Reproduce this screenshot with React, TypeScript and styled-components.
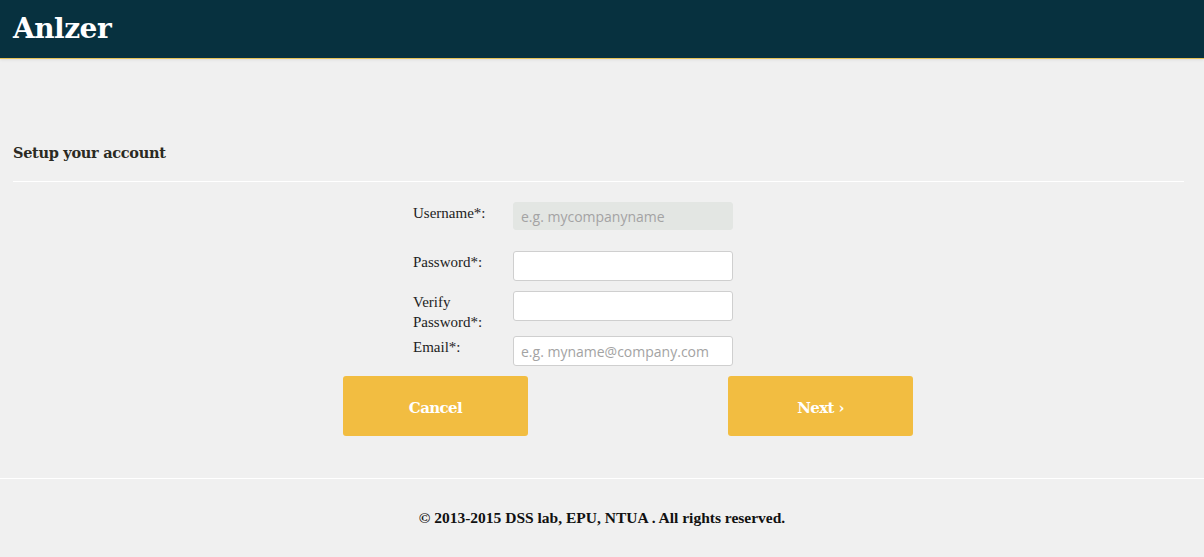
import React from "react";
import styled, { createGlobalStyle } from "styled-components";

const Global = createGlobalStyle`
  html, body { margin: 0; padding: 0; background: #f0f0f0; }
  body { font-family: "DejaVu Serif", Georgia, serif; }
  * { box-sizing: border-box; }
`;

const Header = styled.header`
  height: 59px;
  background: #07313f;
  border-bottom: 1px solid #e6c35a;
  box-shadow: 0 1px 3px rgba(0,0,0,0.08);
  display: flex;
  align-items: center;
  padding: 0 13px;
`;

const Logo = styled.h1`
  margin: 0;
  color: #fff;
  font-family: "DejaVu Serif", serif;
  font-weight: bold;
  font-size: 28px;
  letter-spacing: -0.5px;
  padding-bottom: 1px;
`;

const Main = styled.main`
  padding: 85px 20px 0 13px;
`;

const Title = styled.h2`
  margin: 0;
  font-family: "DejaVu Serif", serif;
  font-weight: bold;
  font-size: 14.5px;
  color: #2b2a22;
  letter-spacing: -0.3px;
  padding-bottom: 20px;
  border-bottom: 1px solid #fff;
`;

const Form = styled.form`
  display: flex;
  flex-direction: column;
  padding-top: 20px;
`;

const Fields = styled.div`
  display: grid;
  grid-template-columns: 100px 220px;
  margin-left: 400px;
`;

const Label = styled.label<{ $mb: number }>`
  font-family: "Liberation Serif", Georgia, serif;
  font-size: 15px;
  line-height: 20px;
  color: #222;
  padding-top: 1px;
  margin-bottom: ${(p) => p.$mb}px;
`;

const Input = styled.input<{ $h: number; $mb: number }>`
  width: 220px;
  height: ${(p) => p.$h}px;
  margin-bottom: ${(p) => p.$mb}px;
  border: 1px solid #cfcfcf;
  border-radius: 3px;
  background: #fff;
  padding: 0 7px;
  font-family: "Open Sans", sans-serif;
  font-size: 14px;
  color: #555;
  &::placeholder { color: #a3a3a3; }
  &:disabled { background: #e3e6e3; border-color: #e3e6e3; }
`;

const Buttons = styled.div`
  display: flex;
  gap: 200px;
  margin-top: 10px;
  margin-left: 330px;
`;

const Button = styled.button`
  width: 185px;
  height: 60px;
  border: none;
  border-radius: 3px;
  background: #f2bd41;
  color: #fff;
  padding: 3px 0 0;
  font-family: "DejaVu Serif", serif;
  font-weight: bold;
  font-size: 15px;
  letter-spacing: -0.6px;
  cursor: pointer;
`;

const Footer = styled.footer`
  margin-top: 42px;
  border-top: 1px solid #fff;
  padding-top: 30px;
  text-align: center;
  font-family: "Liberation Serif", Georgia, serif;
  font-weight: bold;
  font-size: 15.5px;
  color: #111;
`;

const fields = [
  { label: "Username*:", placeholder: "e.g. mycompanyname", disabled: true, h: 28, mb: 21 },
  { label: "Password*:", placeholder: "", h: 30, mb: 10 },
  { label: "Verify Password*:", placeholder: "", h: 30, mb: 4 },
  { label: "Email*:", placeholder: "e.g. myname@company.com", h: 30, mb: 0 },
];

export default function App() {
  return (
    <>
      <Global />
      <Header>
        <Logo>Anlzer</Logo>
      </Header>
      <Main>
        <Title>Setup your account</Title>
        <Form onSubmit={(e) => e.preventDefault()}>
          <Fields>
            {fields.map((f) => (
              <React.Fragment key={f.label}>
                <Label $mb={f.mb}>{f.label}</Label>
                <Input
                  $h={f.h}
                  $mb={f.mb}
                  placeholder={f.placeholder}
                  disabled={f.disabled}
                  type={f.label.includes("Password") ? "password" : "text"}
                />
              </React.Fragment>
            ))}
          </Fields>
          <Buttons>
            <Button type="button">Cancel</Button>
            <Button type="submit">Next ›</Button>
          </Buttons>
        </Form>
      </Main>
      <Footer>© 2013-2015 DSS lab, EPU, NTUA . All rights reserved.</Footer>
    </>
  );
}
